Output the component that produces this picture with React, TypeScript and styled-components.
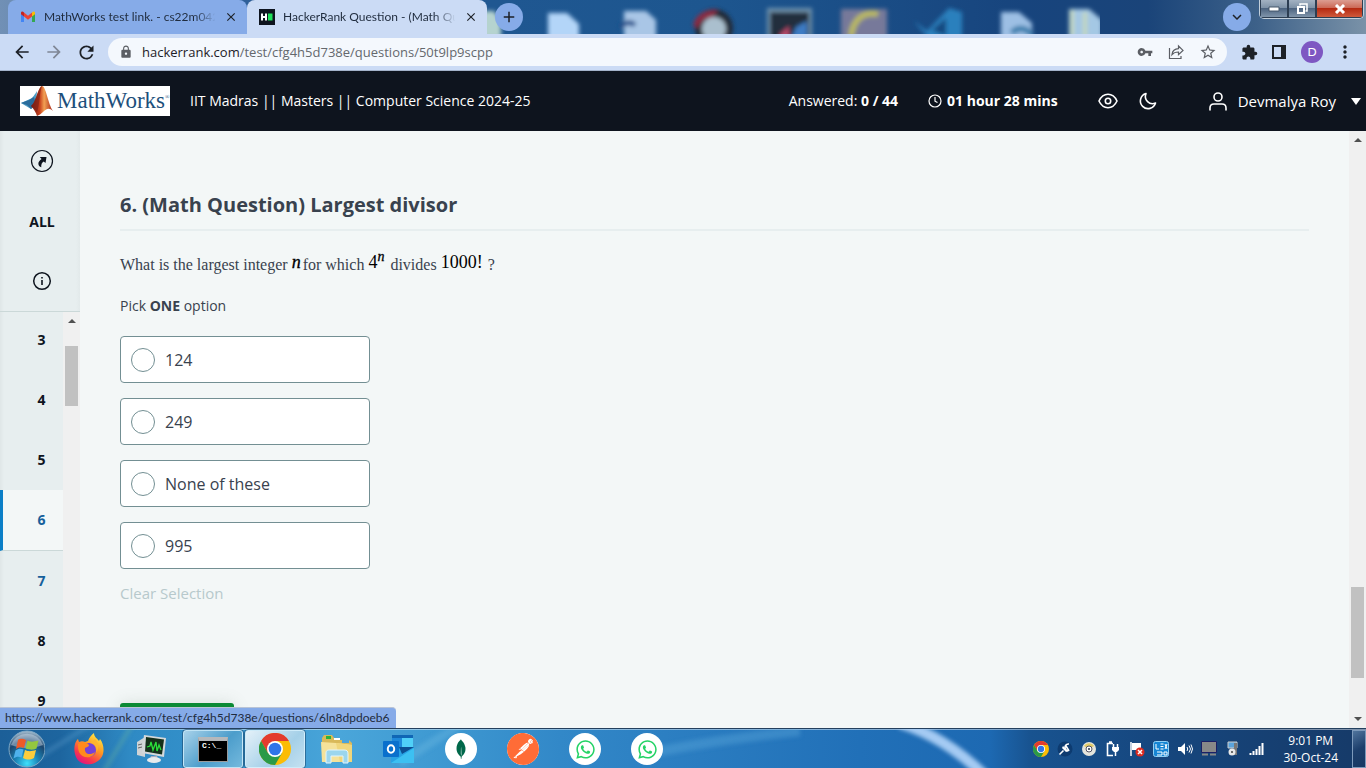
import React from "react";
import styled, { createGlobalStyle, css } from "styled-components";
import {
  MdArrowBack, MdArrowForward, MdRefresh, MdLock, MdVpnKey, MdStarBorder,
  MdExtension, MdMoreVert, MdClose, MdAdd, MdKeyboardArrowDown,
} from "react-icons/md";
import { SiMongodb, SiPostman } from "react-icons/si";
import { FaWhatsapp } from "react-icons/fa";

const ui = `Lato, "Noto Sans", sans-serif`;
const page = `"Open Sans", "Noto Sans", sans-serif`;

const Global = createGlobalStyle`
  *, *::before, *::after { box-sizing: border-box; }
  body { margin: 0; font-family: ${page}; font-size: 14px; color: #39424e; }
  button { font: inherit; color: inherit; background: none; border: 0; padding: 0; }
  h1, p, ol { margin: 0; padding: 0; }
  svg { display: block; flex: none; }
`;

const Screen = styled.div`
  display: flex;
  flex-direction: column;
  height: 100vh;
  overflow: hidden;
`;

/* ---------- browser chrome ---------- */

const TabStrip = styled.div`
  position: relative;
  display: flex;
  align-items: flex-start;
  height: 34px;
  padding-left: 8px;
  overflow: hidden;
  background: linear-gradient(90deg, #7190b5 0, #2f5f98 18%, #1f5791 36%, #1d568f 52%, #17447d 75%, #1a4479 84%, #3d6189 92%, #7a92a8 100%);
`;

const Wallpaper = styled.svg`
  position: absolute;
  left: 0;
  top: 0;
`;

const Tab = styled.div<{ $active?: boolean }>`
  position: relative;
  display: flex;
  align-items: center;
  width: ${(p) => (p.$active ? 240 : 239)}px;
  height: 34px;
  padding: 0 8px 0 12px;
  border-radius: 8px 8px 0 0;
  font: 12px/16px ${ui};
  color: #1f2b3d;
  background: ${(p) => (p.$active ? "#cbdbf5" : "#86abe8")};
`;

const TabTitle = styled.span`
  flex: 1;
  margin: 0 4px 0 8px;
  overflow: hidden;
  white-space: nowrap;
  mask-image: linear-gradient(90deg, #000 86%, transparent 98%);
`;

const IconButton = styled.button<{ $size?: number; $round?: boolean }>`
  position: relative;
  display: flex;
  flex: none;
  align-items: center;
  justify-content: center;
  width: ${(p) => p.$size ?? 16}px;
  height: ${(p) => p.$size ?? 16}px;
  color: #1d2127;
  ${(p) => p.$round && css`border-radius: 50%; background: #86abe8; margin: 3px 0 0 8px;`}
`;

const Spacer = styled.div`
  flex: 1;
`;

const WindowControls = styled.div`
  position: relative;
  display: flex;
  height: 19px;
  margin: 0 2px 0 8px;
  border: 1px solid #c2cfdb;
  border-top: 0;
  border-radius: 0 0 5px 5px;
  overflow: hidden;
`;

const WindowButton = styled.button<{ $close?: boolean }>`
  display: flex;
  align-items: center;
  justify-content: center;
  width: ${(p) => (p.$close ? 47 : 28)}px;
  height: 18px;
  border: 1px solid #2d3e52;
  border-top: 0;
  background: ${(p) =>
    p.$close
      ? "linear-gradient(#dc9d91 0, #cc6a58 45%, #b52a12 50%, #cf5a3c 100%)"
      : "linear-gradient(#a3b2c2 0, #7f93a8 45%, #4d6480 50%, #8095ab 100%)"};
`;

const Toolbar = styled.div`
  display: flex;
  align-items: center;
  height: 37px;
  padding: 0 13px;
  gap: 14px;
  background: #cbdbf5;
  border-bottom: 1px solid #a4b3ca;
`;

const Omnibox = styled.div`
  display: flex;
  flex: 1;
  align-items: center;
  height: 28px;
  margin-left: -1px;
  padding: 0 10px 0 11px;
  gap: 14px;
  border-radius: 14px;
  background: #f4f8fd;
  color: #5b5e64;
`;

const Address = styled.div`
  flex: 1;
  margin-left: -5px;
  font: 13px/20px ${page};
  color: #64686d;
  b { font-weight: 400; color: #1d2127; }
`;

const Avatar = styled.button`
  width: 22px;
  height: 22px;
  border-radius: 50%;
  background: #7e57c2;
  color: #fff;
  font: 12px/22px ${ui};
`;

/* ---------- test header ---------- */

const Header = styled.header`
  display: flex;
  flex: none;
  align-items: center;
  height: 60px;
  padding: 0 5px 0 20px;
  background: #0e141e;
  color: #fff;
  line-height: 20px;
  white-space: nowrap;
`;

const TestName = styled.span`
  margin-left: 20px;
`;

const Timer = styled.strong`
  display: flex;
  align-items: center;
  gap: 5px;
  margin: 0 40px 0 30px;
`;

const HeaderIcons = styled.div`
  display: flex;
  gap: 20px;
  margin-right: 50px;
  button { width: 20px; color: #fff; }
`;

const User = styled.button`
  display: flex;
  align-items: center;
  gap: 10px;
  font-size: 15px;
`;

const Caret = styled.span`
  margin-left: 5px;
  border: 5px solid transparent;
  border-top: 7px solid #fff;
  border-bottom: 0;
`;

/* ---------- page body ---------- */

const Body = styled.div`
  position: relative;
  display: flex;
  flex: 1;
  min-height: 0;
  background: #f3f7f7;
`;

const Sidebar = styled.nav`
  display: flex;
  flex-direction: column;
  width: 80px;
  background: linear-gradient(90deg, #dfe6e7 0, #e7eeef 4px, #e7eeef 76px, #e2e9ea 100%);
`;

const SideTop = styled.div`
  display: flex;
  flex-direction: column;
  flex: none;
  height: 181px;
  padding-left: 4px;
  border-bottom: 1px solid #cbd8d8;
  button {
    display: flex;
    align-items: center;
    justify-content: center;
    height: 60px;
    font-weight: 700;
    color: #0e141e;
  }
`;

const SideScroll = styled.div`
  display: flex;
  flex: 1;
  min-height: 0;
  overflow: hidden;
`;

const QuestionList = styled.ol`
  flex: 1;
  margin-top: -2px;
  list-style: none;
`;

const QuestionLink = styled.a<{ $active?: boolean; $hover?: boolean }>`
  display: block;
  padding: 20px 0 20px 17px;
  border-left: 3px solid transparent;
  font-weight: 700;
  line-height: 20px;
  text-align: center;
  text-decoration: none;
  color: ${(p) => (p.$active || p.$hover ? "#16609c" : "#0e141e")};
  ${(p) => p.$active && css`
    background: #f3f7f7;
    border-left-color: #0b7fc7;
    border-bottom: 1px solid #cbd8d8;
  `}
`;

const ScrollTrack = styled.div`
  display: flex;
  flex: none;
  flex-direction: column;
  justify-content: space-between;
  align-items: center;
  width: 17px;
  padding: 7px 2px;
  background: #f0f0f0;
`;

const ScrollArrow = styled.span<{ $down?: boolean }>`
  border: 4px solid transparent;
  ${(p) => p.$down
    ? css`border-top-color: #505050; border-bottom: 0;`
    : css`border-bottom-color: #505050; border-top: 0;`}
`;

const ScrollThumb = styled.span<{ $size: number; $before: number }>`
  width: 13px;
  height: ${(p) => p.$size}px;
  margin-top: ${(p) => p.$before}px;
  margin-bottom: auto;
  background: #c1c1c1;
`;

const Content = styled.main`
  display: flex;
  flex: 1;
  flex-direction: column;
  align-items: flex-start;
  padding: 60px 40px 0;
  overflow: hidden;
`;

const Title = styled.h1`
  width: 100%;
  padding-bottom: 10px;
  border-bottom: 2px solid #e7eeef;
  font-size: 20px;
  line-height: 28px;
  font-weight: 700;
`;

const Prompt = styled.p`
  margin-top: 22px;
  font: 16px/24px "Liberation Serif", serif;
`;

const Formula = styled.span`
  position: relative;
  bottom: 2px;
  padding-right: 1px;
  font-size: 18px;
  line-height: 20px;
  color: #000;
  sup { font-size: 14px; line-height: 10px; }
`;

const Variable = styled.i`
  padding-right: 1px;
  -webkit-text-stroke: 0.3px #000;
`;

const Hint = styled.p`
  margin-top: 19px;
  line-height: 20px;
`;

const Options = styled.div`
  display: flex;
  flex-direction: column;
  gap: 15px;
  margin-top: 20px;
`;

const Option = styled.label`
  display: flex;
  align-items: center;
  gap: 10px;
  width: 250px;
  height: 47px;
  padding-left: 10px;
  border: 1px solid #738f93;
  border-radius: 4px;
  background: #fff;
  font-size: 16px;
  line-height: 24px;
`;

const Radio = styled.input`
  appearance: none;
  width: 24px;
  height: 24px;
  margin: 0;
  border: 1px solid #738f93;
  border-radius: 50%;
  background: #fff;
`;

const ClearButton = styled.button`
  margin-top: 14px;
  font-size: 15px;
  line-height: 20px;
  color: #b7c9cc;
`;

const NextButton = styled.button`
  flex: none;
  width: 114px;
  height: 40px;
  margin-top: 100px;
  border-radius: 3px;
  background: #0b8a35;
  box-shadow: 0 0 16px rgba(100, 120, 100, 0.18);
`;

const StatusBubble = styled.div`
  position: absolute;
  left: 0;
  bottom: 0;
  height: 21px;
  padding: 0 7px 0 5px;
  border-top: 1px solid #b9c4d6;
  border-radius: 0 4px 0 0;
  background: #86abe8;
  color: #1f2b3d;
  font: 12px/20px ${ui};
`;

/* ---------- taskbar ---------- */

const Taskbar = styled.footer`
  position: relative;
  display: flex;
  flex: none;
  align-items: center;
  height: 40px;
  border-top: 1px solid #24405e;
  box-shadow: inset 0 1px 0 rgba(255, 255, 255, 0.45);
  color: #fff;
  background: linear-gradient(90deg, #1c5f98 0, #1d659f 60px, #2f8ac4 130px, #3492cc 220px, #4aa6da 340px, #3f9ad2 430px, #3288c8 560px, #2a7cc0 700px, #2170b8 860px, #1d69b2 990px, #185390 1030px, #16477f 1150px, #163a68 100%);
`;

const Start = styled.button`
  position: relative;
  width: 58px;
  height: 38px;
  padding-left: 7px;
`;

const Task = styled.button<{ $open?: boolean; $front?: boolean }>`
  position: relative;
  display: flex;
  align-items: center;
  justify-content: center;
  width: 60px;
  height: 38px;
  margin: 1px 1px 0;
  border-radius: 3px;
  ${(p) => p.$open && css`
    border: 1px solid rgba(210, 238, 252, 0.85);
    outline: 1px solid rgba(20, 60, 95, 0.5);
    background: ${p.$front
      ? "linear-gradient(135deg, #e4f1f9, #a5d0e8 60%, #c4e1f1)"
      : "linear-gradient(135deg, #a8d2ea, #4c9dcb 55%, #74b9dd)"};
  `}
`;

const Disc = styled.span`
  display: flex;
  align-items: center;
  justify-content: center;
  width: 32px;
  height: 32px;
  border-radius: 50%;
  background: #fff;
`;

const Tray = styled.div`
  display: flex;
  align-items: center;
  gap: 8px;
`;

const Clock = styled.div`
  margin: 0 14px 0 18px;
  font: 12px/17px ${page};
  text-align: center;
`;

const ShowDesktop = styled.button`
  width: 14px;
  height: 38px;
  border: 1px solid #7d9abb;
  background: linear-gradient(150deg, #50749c, #1d3f6c 50%, #173762);
`;

/* ---------- drawings ---------- */

const Gmail = () => (
  <svg width="16" height="16" viewBox="0 0 16 16">
    <path d="M1 4v9h3V7z" fill="#4285f4" /><path d="M12 7v6h3V4z" fill="#34a853" />
    <path d="M4 3.500 8 6.800l4-3.300V7.500L8 10.800 4 7.500z" fill="#ea4335" />
    <path d="M1 4c0-1.700 1.700-2 3-.5v4L1 5.200z" fill="#c5221f" />
    <path d="M15 4c0-1.700-1.700-2-3-.5v4l3-2.300z" fill="#fbbc04" />
  </svg>
);

const HackerRank = () => (
  <svg width="16" height="16" viewBox="0 0 16 16">
    <rect width="16" height="16" fill="#0e141e" />
    <path d="M3 4.500v7M7 4.500v7M3 8h4" stroke="#fff" strokeWidth="2" />
    <rect x="9" y="4.500" width="4.500" height="7" fill="#1ee05a" />
  </svg>
);

const DesktopIcons = () => (
  <Wallpaper width="1100" height="34" viewBox="0 0 1100 34" aria-hidden="true">
    <defs><filter id="soft" x="-20%" y="-20%" width="140%" height="140%"><feGaussianBlur stdDeviation="2.200" /></filter></defs>
    <g filter="url(#soft)">
      <path d="M480 11h14l7 10v17h-21z" fill="#b5d3cf" />
      <path d="M548 13h19l12 11v16h-31z" fill="#b3d5f8" />
      <path d="M624 11h22l10 9v20h-32z" fill="#a9c6e6" />
      <path d="M620 27c4-4 10-6 15-2" stroke="#24508b" strokeWidth="5" fill="none" />
      <circle cx="714" cy="28" r="19" fill="#222b38" />
      <path d="M693 26c2-12 12-17 25-16l-6 8c-9 0-12 5-14 10z" fill="#8b2c42" />
      <circle cx="714" cy="29" r="12" fill="#aabfce" />
      <rect x="767" y="8" width="45" height="34" fill="#6f93ad" />
      <rect x="770" y="12" width="39" height="28" fill="#202e3e" />
      <path d="M780 34l9-8v14h-9z" fill="#b8486a" /><path d="M796 27l11-6v18h-16z" fill="#3d7cc4" />
      <rect x="841" y="9" width="46" height="34" fill="#77799a" />
      <path d="M878 14c-15-3-25 6-27 22" stroke="#b9b861" strokeWidth="6" fill="none" />
      <path d="M914 21l13 10 22-23 13 4v28h-32z" fill="#2b80bd" /><path d="M932 30l14-12v18z" fill="#174a80" />
      <path d="M1001 12h18l13 11v17h-31z" fill="#9dbfe4" /><path d="M1012 33c5-6 14-6 20 2" stroke="#3e7fae" strokeWidth="6" fill="none" />
      <path d="M1069 9h20l13 11v20h-33z" fill="#a4c8e4" /><path d="M1072 10v26M1085 12v26" stroke="#c5d8bb" strokeWidth="4" />
    </g>
  </Wallpaper>
);

const Glare = () => (
  <Wallpaper width="1100" height="39" viewBox="0 0 1100 39" aria-hidden="true">
    <defs><filter id="glow"><feGaussianBlur stdDeviation="2" /></filter></defs>
    <g filter="url(#glow)" fill="none">
      <path d="M900-6Q945 8 984 46" stroke="#a5cbf3" strokeWidth="11" />
      <path d="M104 42L132-4" stroke="#6cb59d" strokeWidth="3" opacity=".5" />
      <path d="M20 40L90-4" stroke="#6aa9d3" strokeWidth="4" opacity=".35" />
      <path d="M650 24Q720 10 800 2" stroke="#63aee0" strokeWidth="10" opacity=".35" />
      <path d="M400 34Q430 14 460-4" stroke="#7cc4e8" strokeWidth="8" opacity=".3" />
    </g>
  </Wallpaper>
);

const Share = () => (
  <svg width="18" height="18" viewBox="0 0 18 18" fill="none" stroke="#5b5e64" strokeWidth="1.200">
    <path d="M2.500 5v10.500h11.500v-2.500M5 11.500c.5-4 3-5.700 6.500-5.800V3l4.500 4.400-4.500 4.300V9C8.500 9 6.500 9.700 5 11.500z" />
  </svg>
);

const SidePanel = () => (
  <svg width="16" height="16" viewBox="0 0 16 16"><path d="M2 2h12v12H2z" fill="none" stroke="#1d2127" strokeWidth="2" /><path d="M10 1h5v14h-5z" fill="#1d2127" /></svg>
);

const LogoBox = styled.div`
  display: flex;
  align-items: center;
  width: 150px;
  height: 30px;
  overflow: hidden;
  background: #fff;
  color: #1d4f7b;
  font: 23px/30px "Liberation Serif", serif;
  sup { align-self: flex-start; font-size: 6px; line-height: 22px; }
`;

const Logo = () => (
  <LogoBox>
    <svg width="37" height="30" viewBox="0 0 37 30">
      <defs><linearGradient id="peak" x1="0" x2="1"><stop offset="0" stopColor="#6e1a15" /><stop offset=".4" stopColor="#c8401c" /><stop offset=".6" stopColor="#f2a052" /><stop offset="1" stopColor="#a82418" /></linearGradient></defs>
      <path d="M1 17l9-4c3-1 5-5 7-8l-1 14-5 4z" fill="#4c9bc4" />
      <path d="M1 17l6 2 4 4 5-5-2-7-5 3z" fill="#2a6c9c" />
      <path d="M11 20c5-3 7-19 11-20 4 0 6 18 11 25-4-4-7-2-10 1-2 2-4 3-6 4-1-3-3-7-6-10z" fill="url(#peak)" />
      <path d="M11 20c5-3 7-19 11-20-3 8-2 18-5 26-2-3-3-5-6-6z" fill="#7d1f16" opacity=".65" />
    </svg>
    MathWorks<sup>®</sup>
  </LogoBox>
);

const ClockIcon = () => (
  <svg width="14" height="14" viewBox="0 0 14 14" fill="none" stroke="#fff" strokeWidth="1.200"><circle cx="7" cy="7" r="6" /><path d="M7 3v4.200l2.500 1.300" /></svg>
);
const Eye = () => (
  <svg width="20" height="20" viewBox="0 0 20 20" fill="none" stroke="#fff" strokeWidth="1.600"><path d="M1 10c2-4.300 5.200-6.700 9-6.700S17 5.700 19 10c-2 4.300-5.200 6.700-9 6.700S3 14.300 1 10z" /><circle cx="10" cy="10" r="2.700" /></svg>
);
const Moon = () => (
  <svg width="20" height="20" viewBox="0 0 20 20" fill="none" stroke="#fff" strokeWidth="1.600" strokeLinejoin="round"><path d="M8 2.500A7.700 7.700 0 1 0 17.500 12C11.500 14.500 5.500 9 8 2.500z" /></svg>
);
const Person = () => (
  <svg width="20" height="20" viewBox="0 0 20 20" fill="none" stroke="#fff" strokeWidth="1.600" strokeLinecap="round"><circle cx="10" cy="6" r="4" /><path d="M2 19v-2c0-2.500 1.500-4 4-4h8c2.500 0 4 1.500 4 4v2" /></svg>
);
const Jump = () => (
  <svg width="24" height="24" viewBox="0 0 24 24"><circle cx="12" cy="12" r="10.500" fill="none" stroke="#0e141e" strokeWidth="1.200" /><path d="M9.800 8H16.500L15.500 14l-1.800-1.500C11.800 13.800 11 15.500 11.300 18.300 7.800 17 7 13 11.500 10z" fill="#0e141e" /></svg>
);
const Info = () => (
  <svg width="20" height="20" viewBox="0 0 20 20"><circle cx="10" cy="10" r="8.300" fill="none" stroke="#0e141e" strokeWidth="1.500" /><path d="M10 9v5M10 6v1.600" stroke="#0e141e" strokeWidth="1.600" /></svg>
);

const StartOrb = () => (
  <svg width="38" height="38" viewBox="0 0 38 38">
    <defs><radialGradient id="orb" cx=".5" cy=".9" r=".9"><stop offset="0" stopColor="#3fe0fb" /><stop offset=".35" stopColor="#1b86b9" /><stop offset=".7" stopColor="#1b456d" /><stop offset="1" stopColor="#a9c0d2" /></radialGradient></defs>
    <circle cx="20" cy="19" r="18" fill="url(#orb)" stroke="#7fa9c5" />
    <path d="M4 15a17 17 0 0 1 32 0c-10 4-22 4-32 0z" fill="#e8f1f7" opacity=".4" />
    <path d="M11 10c3-2 5-1 8 0l-2 8c-3-1-5-1-8 1z" fill="#ee5a28" />
    <path d="M20.500 10.500c4 2 6 1 11 0l-2 8c-4 2-7 1-11 0z" fill="#93c83f" />
    <path d="M8.500 20.500c3-2 5-2 8-1l-2 8c-3-1-5-1-8 1z" fill="#4fb1ec" />
    <path d="M18 20c4 2 7 1 11 0l-2 8c-4 2-7 2-11 0z" fill="#fccd3c" />
  </svg>
);

const Firefox = () => (
  <svg width="32" height="32" viewBox="0 0 32 32">
    <defs><linearGradient id="fox" x1=".8" y1="0" x2=".2" y2="1"><stop offset="0" stopColor="#fff04a" /><stop offset=".4" stopColor="#ff9a22" /><stop offset=".75" stopColor="#f8364e" /><stop offset="1" stopColor="#d8108c" /></linearGradient></defs>
    <path d="M2 11c1-3 2-4 3-5l1 3c2-1 4-1 6 0l3-1c1-3 3-6 6-8 0 4 3 5 5 8l1-2c4 5 5 14 1 19-7 9-21 8-25-1-2-5-2-9-1-13z" fill="url(#fox)" />
    <circle cx="16" cy="17" r="7" fill="#7542d8" />
    <path d="M5 11c4-2 8-2 11 1 0 2-3 2-4 3-1 6 5 8 10 4-2 7-13 7-16 0-1-3-1-5-1-8z" fill="#ff8a1c" />
    <path d="M17 10c5 0 8 5 6 10 3-4 3-10-1-14z" fill="#ffb52e" />
  </svg>
);

const Monitor = () => (
  <svg width="32" height="32" viewBox="0 0 32 32">
    <path d="M2 9l8-5v20l-8-2z" fill="#cfd3d5" /><path d="M3 12l4-1M3 15l4-1" stroke="#666" />
    <path d="M9 2l22 3-2 19-22-4z" fill="#d4d8da" /><path d="M11 4l18 2.500-2 15-17-3z" fill="#15301b" />
    <path d="M12 14l3-1 1-4 2 8 3-8 1 9 2-6 2 5" stroke="#2ae03a" strokeWidth="1.300" fill="none" />
    <path d="M16 23h6l1 3h-8z" fill="#aab" /><ellipse cx="19" cy="27" rx="7" ry="3" fill="#e8eaec" />
  </svg>
);

const TerminalArt = styled.span`
  width: 30px;
  height: 25px;
  padding-left: 3px;
  border: 1px solid #9a9a9a;
  border-top: 4px solid #b5b8bb;
  background: #000;
  color: #fff;
  font: 700 8px/10px "Liberation Mono", monospace;
  text-align: left;
  white-space: nowrap;
`;

const Chrome = ({ size }: { size: number }) => (
  <svg width={size} height={size} viewBox="0 0 32 32">
    <circle cx="16" cy="16" r="16" fill="#fbbc05" />
    <path d="M2.100 8A16 16 0 0 1 29.900 8H16l-7 12z" fill="#e33b2e" />
    <path d="M2.100 8A16 16 0 0 0 16 32l7-12-7 3-7-3z" fill="#2a9a48" />
    <circle cx="16" cy="16" r="8" fill="#fff" /><circle cx="16" cy="16" r="6.300" fill="#2f74e8" />
  </svg>
);

const Folder = () => (
  <svg width="34" height="32" viewBox="0 0 34 32">
    <path d="M2 5l2-3h8l2 3h5l1 2h9l3 3v17H2z" fill="#d9b95a" />
    <path d="M6 3h5v3H6z" fill="#2bb33c" /><path d="M14 5h6v2h-6z" fill="#fff" /><path d="M22 7h7v3h-7z" fill="#4aa3dd" />
    <path d="M1 9l15 1 16 2v17H2z" fill="#f5e29a" /><path d="M16 10l16 2v17H20z" fill="#f0d67c" />
    <path d="M6 20c0-3 2-3 4-3h14c3 0 4 1 4 4v9h-5v-7H11v7H6z" fill="#9bd6ee" stroke="#e2f5fc" />
  </svg>
);

const Outlook = () => (
  <svg width="32" height="30" viewBox="0 0 32 30">
    <path d="M9 1h21v14H9z" fill="#1066b5" /><path d="M9 4h10v9H9z" fill="#1e88da" /><path d="M19 4h11v9H19z" fill="#50d0f8" />
    <path d="M8 13h23v16H8z" fill="#28a3e4" /><path d="M31 14L8 29h23z" fill="#3cc0f2" /><path d="M16 13h15L19 20z" fill="#0c5094" />
    <rect x="0" y="7" width="16" height="16" rx="1" fill="#0a70cc" /><ellipse cx="8" cy="15" rx="3.200" ry="3.700" fill="none" stroke="#fff" strokeWidth="2" />
  </svg>
);

const TrayArt = ({ children }: { children: React.ReactNode }) => (
  <svg width="16" height="16" viewBox="0 0 16 16">{children}</svg>
);

const questions = [3, 4, 5, 6, 7, 8, 9];
const answers = ["124", "249", "None of these", "995"];

export default function App() {
  return (
    <Screen>
      <Global />
      <TabStrip>
        <DesktopIcons />
        <Tab>
          <Gmail />
          <TabTitle>MathWorks test link. - cs22m042</TabTitle>
          <IconButton aria-label="Close tab"><MdClose size={14} /></IconButton>
        </Tab>
        <Tab $active>
          <HackerRank />
          <TabTitle>HackerRank Question - (Math Qu</TabTitle>
          <IconButton aria-label="Close tab"><MdClose size={14} /></IconButton>
        </Tab>
        <IconButton $size={28} $round aria-label="New tab"><MdAdd size={18} /></IconButton>
        <Spacer />
        <IconButton $size={28} $round aria-label="Search tabs"><MdKeyboardArrowDown size={18} /></IconButton>
        <WindowControls>
          <WindowButton aria-label="Minimize"><svg width="12" height="6"><path d="M1 1h10v4H1z" fill="#fff" stroke="#45566b" /></svg></WindowButton>
          <WindowButton aria-label="Restore"><svg width="12" height="12" fill="none" stroke="#fff" strokeWidth="2"><path d="M4 2.500V1h7v7H9.500" strokeWidth="1.500" /><path d="M2 4h6v6H2z" /></svg></WindowButton>
          <WindowButton $close aria-label="Close"><svg width="12" height="10" stroke="#fff" strokeWidth="3"><path d="M2 1l8 8M10 1L2 9" /></svg></WindowButton>
        </WindowControls>
      </TabStrip>

      <Toolbar>
        <IconButton $size={18} aria-label="Back"><MdArrowBack size={20} /></IconButton>
        <IconButton $size={18} aria-label="Forward"><MdArrowForward size={20} color="#7f8795" /></IconButton>
        <IconButton $size={18} aria-label="Reload"><MdRefresh size={21} /></IconButton>
        <Omnibox>
          <MdLock size={14} />
          <Address><b>hackerrank.com</b>/test/cfg4h5d738e/questions/50t9lp9scpp</Address>
          <MdVpnKey size={16} />
          <Share />
          <MdStarBorder size={18} />
        </Omnibox>
        <IconButton aria-label="Extensions"><MdExtension size={17} /></IconButton>
        <IconButton aria-label="Side panel"><SidePanel /></IconButton>
        <Avatar>D</Avatar>
        <IconButton aria-label="Menu"><MdMoreVert size={20} /></IconButton>
      </Toolbar>

      <Header>
        <Logo />
        <TestName>IIT Madras || Masters || Computer Science 2024-25</TestName>
        <Spacer />
        <span>Answered: <b>0 / 44</b></span>
        <Timer><ClockIcon />01 hour 28 mins</Timer>
        <HeaderIcons>
          <button aria-label="Preview"><Eye /></button>
          <button aria-label="Dark mode"><Moon /></button>
        </HeaderIcons>
        <User><Person />Devmalya Roy<Caret /></User>
      </Header>

      <Body>
        <Sidebar>
          <SideTop>
            <button aria-label="Jump"><Jump /></button>
            <button>ALL</button>
            <button aria-label="Information"><Info /></button>
          </SideTop>
          <SideScroll>
            <QuestionList>
              {questions.map((n) => (
                <li key={n}><QuestionLink href="#" $active={n === 6} $hover={n === 7}>{n}</QuestionLink></li>
              ))}
            </QuestionList>
            <ScrollTrack><ScrollArrow /><ScrollThumb $size={60} $before={23} /></ScrollTrack>
          </SideScroll>
        </Sidebar>
        <Content>
          <Title>6. (Math Question) Largest divisor</Title>
          <Prompt>
            What is the largest integer <Formula><Variable>n</Variable></Formula>for which <Formula>4<sup><Variable>n</Variable></sup></Formula> divides <Formula>1000!</Formula> ?
          </Prompt>
          <Hint>Pick <b>ONE</b> option</Hint>
          <Options role="radiogroup">
            {answers.map((a) => (
              <Option key={a}><Radio type="radio" name="answer" />{a}</Option>
            ))}
          </Options>
          <ClearButton>Clear Selection</ClearButton>
          <NextButton aria-label="Next" />
        </Content>
        <ScrollTrack><ScrollArrow /><ScrollThumb $size={91} $before={445} /><ScrollArrow $down /></ScrollTrack>
        <StatusBubble>https://www.hackerrank.com/test/cfg4h5d738e/questions/6ln8dpdoeb6</StatusBubble>
      </Body>

      <Taskbar>
        <Glare />
        <Start aria-label="Start"><StartOrb /></Start>
        <Task aria-label="Firefox"><Firefox /></Task>
        <Task aria-label="Monitor"><Monitor /></Task>
        <Task $open aria-label="Command prompt"><TerminalArt>C:\_</TerminalArt></Task>
        <Task $open $front aria-label="Chrome"><Chrome size={32} /></Task>
        <Task aria-label="Explorer"><Folder /></Task>
        <Task aria-label="Outlook"><Outlook /></Task>
        <Task aria-label="MongoDB"><Disc><SiMongodb size={20} color="#00684a" /></Disc></Task>
        <Task aria-label="Postman"><Disc><SiPostman size={32} color="#ff6c37" /></Disc></Task>
        <Task aria-label="WhatsApp"><Disc><FaWhatsapp size={21} color="#25d366" /></Disc></Task>
        <Task aria-label="WhatsApp"><Disc><FaWhatsapp size={21} color="#25d366" /></Disc></Task>
        <Spacer />
        <Tray>
          <Chrome size={16} />
          <TrayArt><circle cx="8" cy="8" r="7.500" fill="#0d3b70" /><path d="M2.500 13.500l4-4M12 3a3.500 3.500 0 1 0-1 7M9 5l3 5" stroke="#fff" strokeWidth="1.600" fill="none" /><path d="M5 7l4 4 2-1-5-5z" fill="#fff" /></TrayArt>
          <TrayArt><circle cx="8" cy="8" r="7" fill="#e4e4dc" /><path d="M3 5a6 6 0 0 1 10 0l-3 2H6z" fill="#e3cd6a" /><circle cx="8" cy="8" r="3" fill="#fff" stroke="#556" /><circle cx="8" cy="8" r="1" fill="#234" /></TrayArt>
          <TrayArt><path d="M8 14.500H2.500v-12H8M4 1h3" fill="none" stroke="#fff" strokeWidth="1.600" /><path d="M7 6h7v3l-2 2H9L7 9z" fill="#fff" /><path d="M8.500 3v4M12.500 3v4M10.500 10v5" stroke="#fff" strokeWidth="1.500" /></TrayArt>
          <TrayArt><path d="M2 1v14" stroke="#fff" strokeWidth="1.500" /><path d="M3 2h9v7H3z" fill="#fff" /><circle cx="11" cy="11" r="4.500" fill="#dd2b20" /><path d="M9 9l4 4M13 9l-4 4" stroke="#fff" strokeWidth="1.500" /></TrayArt>
          <TrayArt><rect x=".5" y=".5" width="15" height="15" rx="2" fill="#1585d4" stroke="#8fd0f5" /><path d="M3 3v5h3M7.500 3h3M7.500 5.500h3M7.500 8h3M12 3l2 5M14 3l-2 5M4 11h5v3H4M11 11h3v3h-3z" stroke="#fff" fill="none" /></TrayArt>
          <TrayArt><path d="M1 6h3l4-4v12l-4-4H1z" fill="#fff" /><path d="M10 6q1.500 2 0 4M12 4.500q3 3.500 0 7M14 3.500q3 4.500 0 9" stroke="#fff" fill="none" /></TrayArt>
          <TrayArt><path d="M.5.500h15v11H.5z" fill="#888" stroke="#1b1f66" /><path d="M1 13.500h6M9 13.500h6" stroke="#888" strokeWidth="2" /></TrayArt>
          <TrayArt><path d="M3 1h9v6H3z" fill="#5ba4dd" stroke="#ccc" /><path d="M9 2h3v12H9z" fill="#777" /><circle cx="7" cy="11" r="3.500" fill="#e8e8e8" /><circle cx="7" cy="11" r="1" fill="#444" /></TrayArt>
          <TrayArt><path d="M1.500 14v-2M4.500 14v-4M7.500 14V8M10.500 14V5M13.500 14V2" stroke="#fff" strokeWidth="2" /></TrayArt>
        </Tray>
        <Clock>9:01 PM<br />30-Oct-24</Clock>
        <ShowDesktop aria-label="Show desktop" />
      </Taskbar>
    </Screen>
  );
}
